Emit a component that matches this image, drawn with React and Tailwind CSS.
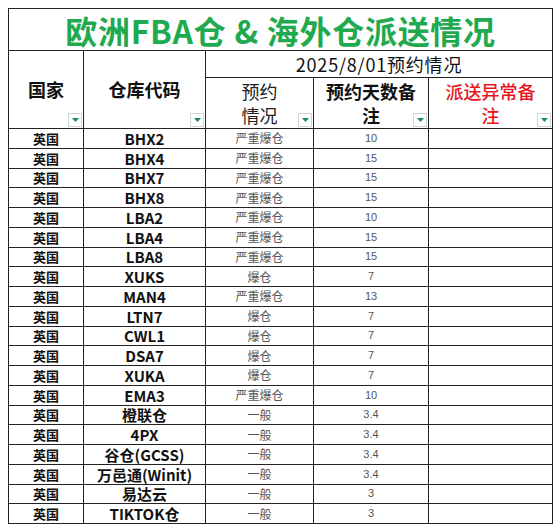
const rows = [
  ["BHX2", "严重爆仓", "10"],
  ["BHX4", "严重爆仓", "15"],
  ["BHX7", "严重爆仓", "15"],
  ["BHX8", "严重爆仓", "15"],
  ["LBA2", "严重爆仓", "10"],
  ["LBA4", "严重爆仓", "15"],
  ["LBA8", "严重爆仓", "15"],
  ["XUKS", "爆仓", "7"],
  ["MAN4", "严重爆仓", "13"],
  ["LTN7", "爆仓", "7"],
  ["CWL1", "爆仓", "7"],
  ["DSA7", "爆仓", "7"],
  ["XUKA", "爆仓", "7"],
  ["EMA3", "严重爆仓", "10"],
  ["橙联仓", "一般", "3.4"],
  ["4PX", "一般", "3.4"],
  ["谷仓(GCSS)", "一般", "3.4"],
  ["万邑通(Winit)", "一般", "3.4"],
  ["易达云", "一般", "3"],
  ["TIKTOK仓", "一般", "3"],
];

const Filter = () => (
  <span className="absolute right-[1px] bottom-[1px] w-[14px] h-[14px] border border-[#d4d4d4] bg-white flex items-center justify-center">
    <svg width="7" height="4" viewBox="0 0 7 4">
      <path d="M0 0 L7 0 L3.5 4 Z" fill="#1e8c4e" />
    </svg>
  </span>
);

const cell = "border border-[#222] p-0 text-center align-middle";

export default function App() {
  return (
    <div className="w-[560px] h-[532px] bg-white pt-2 pl-2 font-['Noto_Sans_CJK_SC',sans-serif]">
      <table className="border-collapse table-fixed w-[544px]">
        <colgroup>
          <col className="w-[75px]" />
          <col className="w-[122px]" />
          <col className="w-[108px]" />
          <col className="w-[115px]" />
          <col className="w-[124px]" />
        </colgroup>
        <tbody>
          <tr className="h-[42px]">
            <td colSpan={5} className={`${cell} text-[#1faa4f] text-[32px] font-bold leading-none tracking-[0.7px]`}>
              欧洲FBA仓 &amp; 海外仓派送情况
            </td>
          </tr>
          <tr className="h-[27px]">
            <td rowSpan={2} className={`${cell} relative text-[18px] font-bold text-[#111]`}>
              国家
              <Filter />
            </td>
            <td rowSpan={2} className={`${cell} relative text-[18px] font-bold text-[#111]`}>
              仓库代码
              <Filter />
            </td>
            <td colSpan={3} className={`${cell} text-[18px] text-[#111] leading-none tracking-[0.8px]`}>
              2025/8/01预约情况
            </td>
          </tr>
          <tr className="h-[51px]">
            <td className={`${cell} relative text-[18px] text-[#222] leading-[24px]`}>
              预约
              <br />
              情况
              <Filter />
            </td>
            <td className={`${cell} relative text-[18px] font-semibold text-[#111] leading-[24px]`}>
              预约天数备
              <br />
              注
              <Filter />
            </td>
            <td className={`${cell} relative text-[18px] font-medium text-[#e8141b] leading-[24px]`}>
              派送异常备
              <br />
              注
              <Filter />
            </td>
          </tr>
          {rows.map((r, i) => (
            <tr key={i} className="h-[19.75px]">
              <td className={`${cell} text-[13px] font-bold text-[#111] leading-none`}>英国</td>
              <td className={`${cell} text-[15px] font-bold text-[#111] leading-none`}>{r[0]}</td>
              <td className={`${cell} text-[12px] text-[#555] leading-none`}>{r[1]}</td>
              <td className={`${cell} text-[11px] text-[#555] leading-none font-['Liberation_Sans',sans-serif]`}>{r[2]}</td>
              <td className={`${cell}`}></td>
            </tr>
          ))}
        </tbody>
      </table>
    </div>
  );
}
